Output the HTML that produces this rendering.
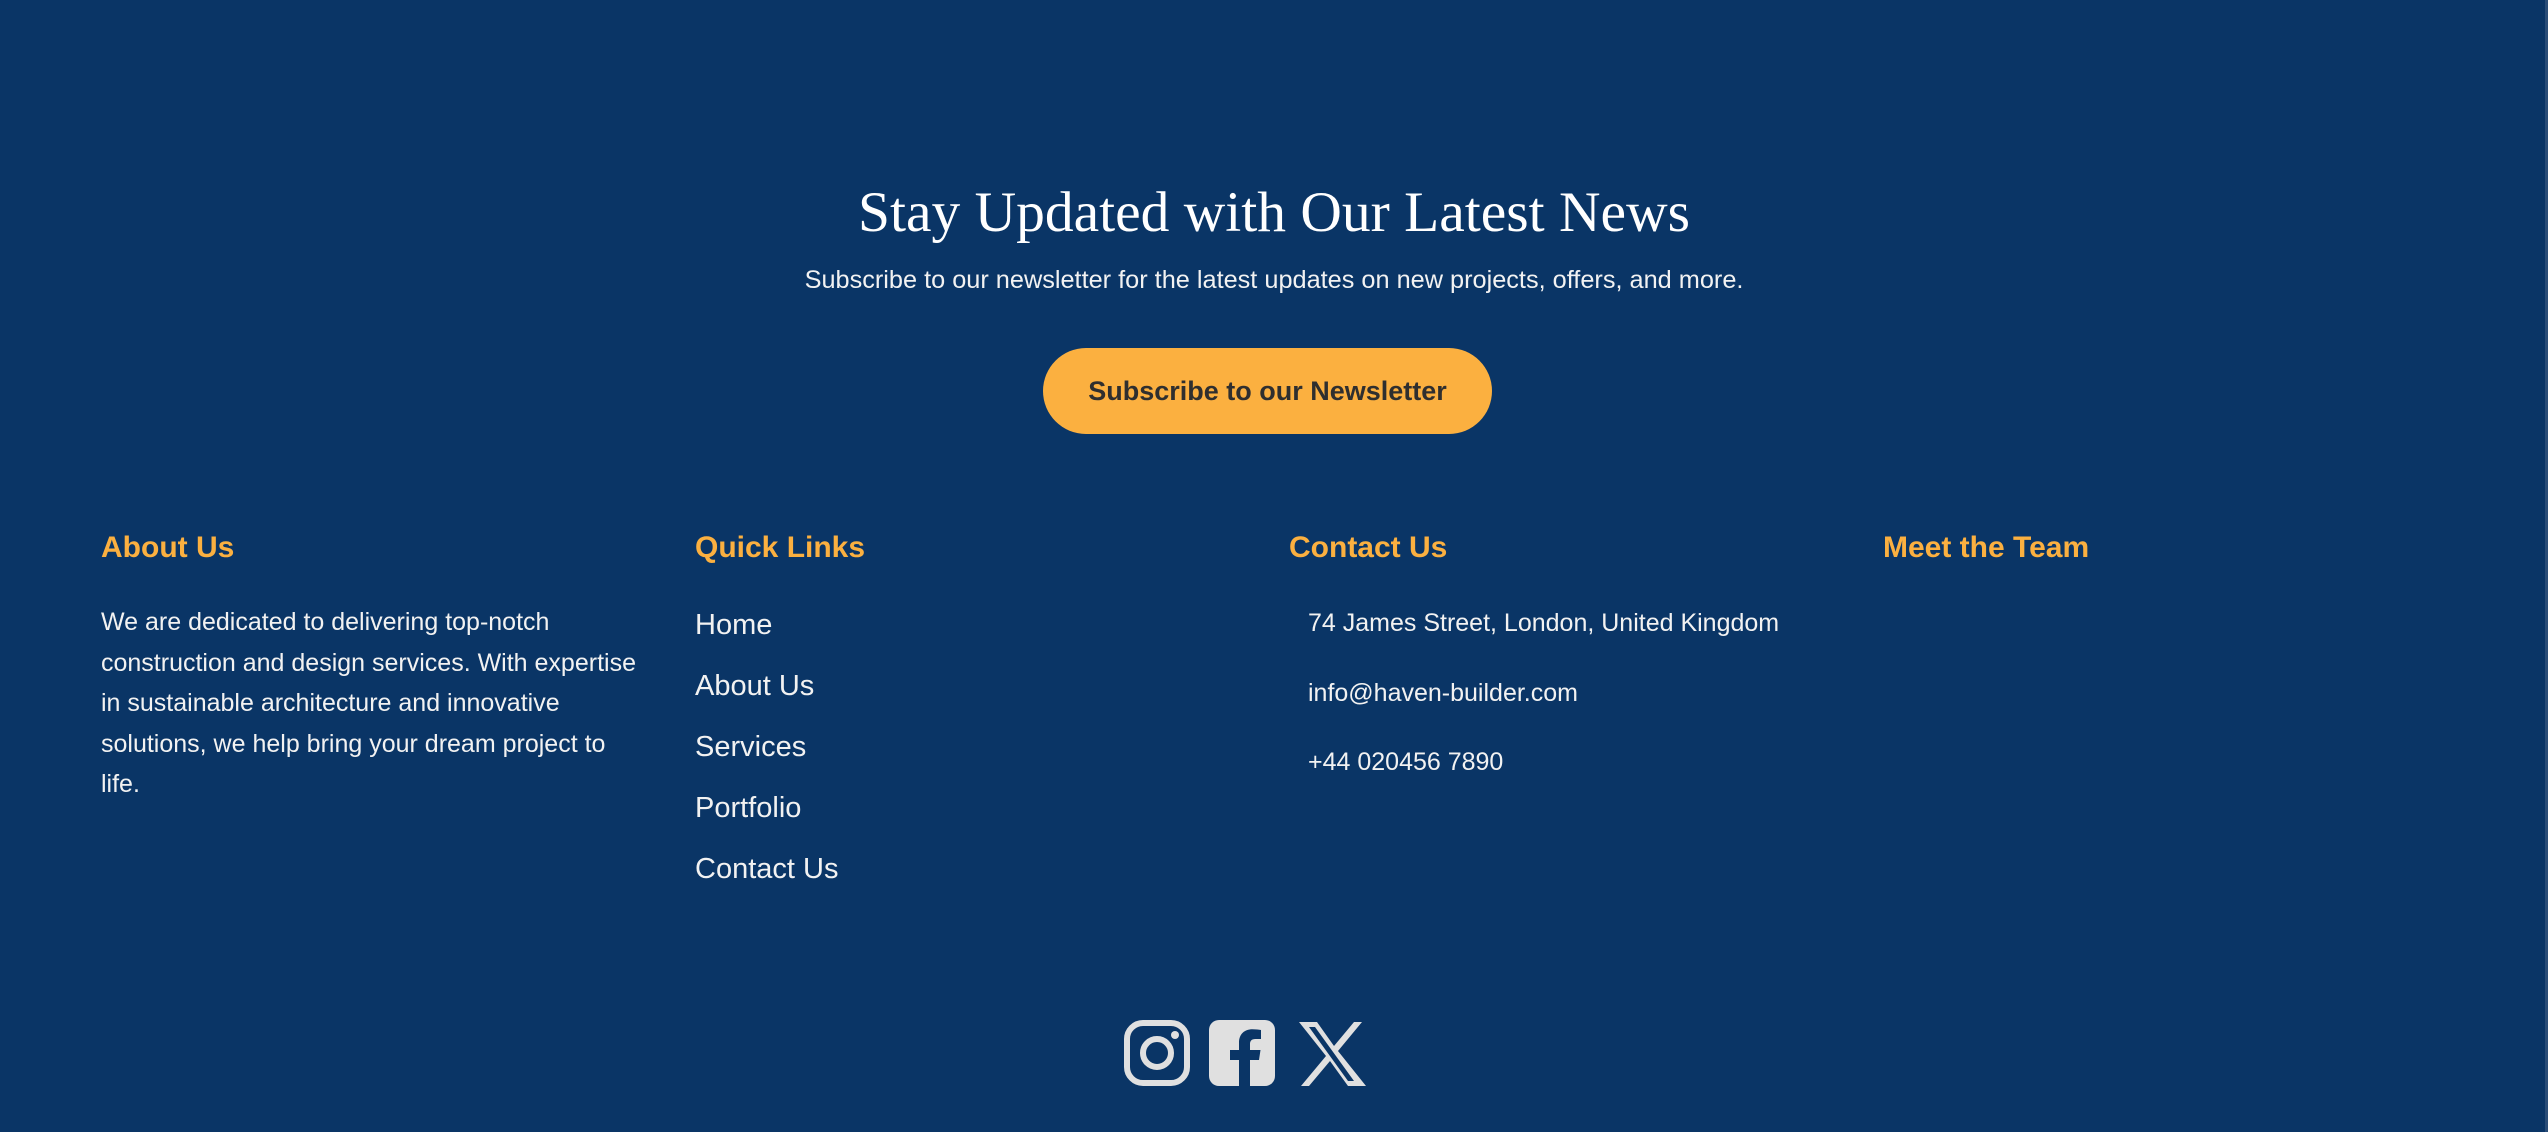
<!DOCTYPE html>
<html><head><meta charset="utf-8"><style>
*{margin:0;padding:0;box-sizing:border-box}
html,body{width:2548px;height:1132px;overflow:hidden;background:#0a3566;font-family:"Liberation Sans",Arial,sans-serif;color:#fff}
h2{position:absolute;left:0;width:2548px;top:177px;text-align:center;font-family:"Liberation Serif",serif;font-weight:normal;font-size:57.5px;line-height:72px}
.sub{position:absolute;left:0;width:2548px;top:264px;text-align:center;font-size:25.3px;line-height:32px;color:#f2f2f2}
.btn{position:absolute;left:1043px;top:348px;width:449px;height:86px;border-radius:43px;background:#fbb040;color:#2f2f2f;font-weight:bold;font-size:27px;line-height:86px;text-align:center}
.col{position:absolute;top:528px}
.col h3{font-size:30px;color:#fbb040;line-height:40px;font-weight:bold}
.about{font-size:25px;line-height:40.6px;margin-top:34px;width:545px;color:#f2f2f2}
.links div{font-size:29px;line-height:61px;color:#f2f2f2}
.links{margin-top:27px}
.contact{margin-top:39px;padding-left:19px}
.contact div{font-size:25px;line-height:32px;margin-bottom:37.5px;color:#f2f2f2}
.icons{position:absolute;top:1020px;left:1124px}
.right{position:absolute;right:0;top:0;width:3px;height:1132px;background:#2a4d78}
</style></head><body>
<h2>Stay Updated with Our Latest News</h2>
<div class="sub">Subscribe to our newsletter for the latest updates on new projects, offers, and more.</div>
<div class="btn">Subscribe to our Newsletter</div>
<div class="col" style="left:101px"><h3>About Us</h3><div class="about">We are dedicated to delivering top-notch construction and design services. With expertise in sustainable architecture and innovative solutions, we help bring your dream project to life.</div></div>
<div class="col" style="left:695px"><h3>Quick Links</h3><div class="links"><div>Home</div><div>About Us</div><div>Services</div><div>Portfolio</div><div>Contact Us</div></div></div>
<div class="col" style="left:1289px"><h3>Contact Us</h3><div class="contact"><div>74 James Street, London, United Kingdom</div><div>info@haven-builder.com</div><div>+44 020456 7890</div></div></div>
<div class="col" style="left:1883px"><h3>Meet the Team</h3></div>
<svg class="icons" width="245" height="66" viewBox="0 0 245 66">
 <g fill="none" stroke="#e0e0e0" stroke-width="6">
  <rect x="3" y="3" width="60" height="60" rx="16"/>
  <circle cx="33" cy="33" r="14"/>
 </g>
 <circle cx="51" cy="15" r="4" fill="#e0e0e0"/>
 <rect x="85" y="0" width="66" height="66" rx="10" fill="#e0e0e0"/>
 <path d="M126 66V40h9l1.5-10H126v-6c0-3 1.5-5 5.5-5h5.5v-9c-2-.3-5-.7-8.5-.7-8 0-13.5 4.8-13.5 13.5V30h-9v10h9v26z" fill="#0a3566"/>
 <path d="M175 2h18l17 24 20-24h8l-24 29 28 35h-18l-18-25-21 25h-8l25-30z" fill="#e0e0e0"/>
 <path d="M185 7h6l39 54h-6z" fill="#0a3566"/>
</svg>
<div class="right"></div>
</body></html>
